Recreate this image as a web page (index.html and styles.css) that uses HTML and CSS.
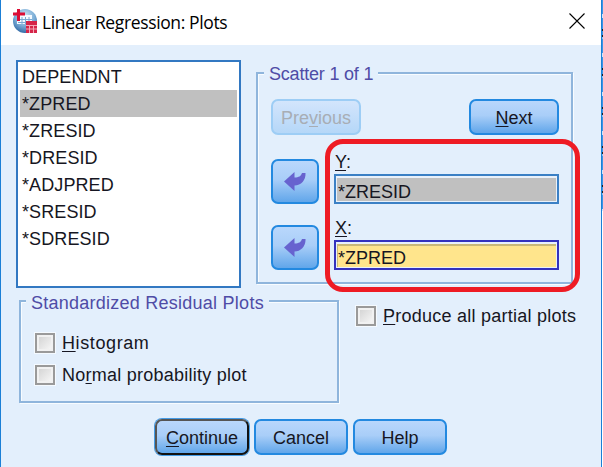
FILE: index.html
```html
<!DOCTYPE html>
<html lang="en">
<head>
<meta charset="utf-8">
<title>Linear Regression: Plots</title>
<link rel="stylesheet" href="styles.css">
</head>
<body>
<div class="dialog">
  <header class="titlebar">
    <svg class="logo" width="24" height="24" viewBox="0 0 24 24">
      <defs><radialGradient id="globe" cx=".5" cy=".3" r=".75"><stop offset="0" stop-color="#d3e7f5"/><stop offset=".55" stop-color="#79acd6"/><stop offset="1" stop-color="#285f9e"/></radialGradient></defs>
      <circle cx="12" cy="12" r="12" fill="url(#globe)"/>
      <path d="M7 6h12v9H4v-4h3z" fill="#f5faff"/>
      <path d="M5 10.500h14M5 13.500h10M9 8v7M12.500 8v7M16 8v5" stroke="#7aa9d3" fill="none"/>
      <path d="M5.500 0v12M0 5h12" stroke="#dc0d35" stroke-width="3"/>
      <rect x="13" y="12" width="11" height="12" fill="#d52549"/>
      <path d="M13 16.500h11M13 20h11M16.500 16v8M20.500 16v8" stroke="#f5a6b6"/>
    </svg>
    <h1 class="title">Linear Regression: Plots</h1>
    <svg class="close" width="16" height="16" viewBox="0 0 16 16"><path d="M.5.5l15 15M15.500.5l-15 15" stroke="#000" stroke-width="1.100"/></svg>
  </header>
  <main class="content">
    <div class="upper">
      <ul class="variables">
        <li>DEPENDNT</li>
        <li class="selected">*ZPRED</li>
        <li>*ZRESID</li>
        <li>*DRESID</li>
        <li>*ADJPRED</li>
        <li>*SRESID</li>
        <li>*SDRESID</li>
      </ul>
      <section class="group scatter">
        <h2 class="legend">Scatter 1 of 1</h2>
        <div class="pager">
          <button class="btn disabled">Pre<u>v</u>ious</button>
          <button class="btn"><u>N</u>ext</button>
        </div>
        <div class="axis">
          <button class="btn move"><svg width="22" height="20" viewBox="0 0 22 20"><path d="M0 9.500L10.500 0v5.500C15 5.500 17 4 18 1h3.500C22 8 17 13.500 10.500 13.500V19z" fill="#6763cf"/></svg></button>
          <div class="slot"><label><u>Y</u>:</label><div class="field"><span>*ZRESID</span></div></div>
        </div>
        <div class="axis">
          <button class="btn move"><svg width="22" height="20" viewBox="0 0 22 20"><path d="M0 9.500L10.500 0v5.500C15 5.500 17 4 18 1h3.500C22 8 17 13.500 10.500 13.500V19z" fill="#6763cf"/></svg></button>
          <div class="slot"><label><u>X</u>:</label><div class="field active"><span>*ZPRED</span></div></div>
        </div>
        <div class="highlight"></div>
      </section>
    </div>
    <div class="lower">
      <section class="group residual">
        <h2 class="legend">Standardized Residual Plots</h2>
        <label class="check"><i class="box"></i><span class="histogram"><u>H</u>istogram</span></label>
        <label class="check"><i class="box"></i><span class="normal">No<u>r</u>mal probability plot</span></label>
      </section>
      <label class="check partial"><i class="box"></i><span><u>P</u>roduce all partial plots</span></label>
    </div>
    <footer class="actions">
      <button class="btn default"><u>C</u>ontinue</button>
      <button class="btn">Cancel</button>
      <button class="btn">Help</button>
    </footer>
  </main>
</div>
<div class="behind"></div>
</body>
</html>
```

FILE: styles.css
```css
* { box-sizing: border-box; }
body {
  margin: 0;
  width: 603px;
  height: 467px;
  overflow: hidden;
  display: flex;
  font: 18px/27px "Liberation Sans", Arial, sans-serif;
  color: #161622;
}
h1, h2, ul { margin: 0; padding: 0; font-weight: 400; }
u { text-underline-offset: 2px; text-decoration-thickness: 1px; text-decoration-skip-ink: none; }
.dialog { width: 602px; height: 467px; border: solid #1b7fd6; border-width: 0 1px; background: #e3effc; }
.behind { width: 1px; height: 211px; background: repeating-linear-gradient(#3b94e6 0 14px, #cfe6fb 14px 18px, #3b94e6 18px 29px, #222 29px 31px, #3b94e6 31px 35px, #222 35px 37px, #8cc4f5 37px 39px); }
.titlebar { height: 45px; background: #fff; display: flex; align-items: center; padding: 0 16px 3px 12px; }
.title { font: 17.5px/24px "Open Sans", "Noto Sans", sans-serif; letter-spacing: -.37px; color: #000; margin: 2px 0 0 5px; flex: 1; }
.content { padding: 15px 28px 0 15px; }
.upper { display: flex; justify-content: space-between; align-items: flex-start; height: 240px; }
.variables { list-style: none; width: 225px; height: 228px; padding: 1px 2px; border: 2px solid #3278c2; background: #fff; letter-spacing: .1px; }
.variables li { padding: 1px 2px 0; height: 27px; }
.variables .selected { background: #c0c0c0; }
.group { border: 2px solid #8fb5dc; box-shadow: 1px 1px 0 #f8fcff, inset 1px 1px 0 #f8fcff; }
.legend { width: fit-content; padding: 0 5px; height: 24px; line-height: 25px; margin-top: -12px; background: #e3effc; color: #4f4ca6; font-size: 18px; white-space: nowrap; }
.scatter { width: 317px; height: 212px; margin-top: 12px; padding: 0 12px 0 13px; position: relative; }
.scatter .legend { margin-left: -7px; letter-spacing: -.2px; }
.pager { display: flex; justify-content: space-between; margin-top: 13px; }
.btn { width: 90px; height: 36px; padding: 2px 0 0; border: 2px solid #2389e0; border-radius: 7px; background: linear-gradient(#b9d7fc, #a9cef8 45%, #61a6ea); font: inherit; color: #161622; }
.disabled { border-color: #9dcdf5; background: linear-gradient(#d3e5fc, #b5d7f8); color: #a8adb4; }
.axis { display: flex; gap: 15px; height: 66px; align-items: flex-start; }
.pager + .axis { margin-top: 12px; }
.move { width: 48px; height: 45px; margin-top: 12px; padding: 0; display: flex; align-items: center; justify-content: center; }
.slot { width: 225px; }
.slot label { display: block; height: 27px; line-height: 31px; padding-left: 1px; }
.field { height: 30px; padding: 2px 1px 1px; border: 2px solid #3b80c5; background: #e9f1fa; }
.field span { display: block; height: 23px; background: #c0c0c0; line-height: 28px; padding-left: 1px; }
.active { border-color: #3432bd; }
.active span { background: #ffe58c; box-shadow: inset 0 2px #c9b878, inset 1px 0 #c9b878; }
.highlight { position: absolute; left: 67px; top: 65px; width: 255px; height: 153px; border: 5px solid #ee1b24; border-radius: 18px; }
.lower { display: flex; align-items: flex-start; }
.residual { flex: none; width: 320px; height: 103px; margin-left: 3px; padding-left: 14px; }
.residual .legend { margin-left: -9px; letter-spacing: .25px; line-height: 27px; }
.check { display: flex; align-items: center; gap: 7px; height: 32px; white-space: nowrap; letter-spacing: .25px; }
.histogram { letter-spacing: .6px; }
.legend + .check { margin-top: 13px; }
.box { flex: none; width: 20px; height: 20px; border: 2px solid #9a9a9a; background: linear-gradient(135deg, #d0d0d0, #fafafa); box-shadow: inset 0 0 0 2px #f1f1f1, 0 0 0 1px #f5faff; }
.partial { margin-left: 17px; flex: none; }
.actions { display: flex; gap: 5px; margin: 16px 0 0 139px; }
.actions .btn { width: 94px; }
.actions .default { border-color: #555 #111 #111 #555; box-shadow: 0 0 0 1px #459be5; }
```
